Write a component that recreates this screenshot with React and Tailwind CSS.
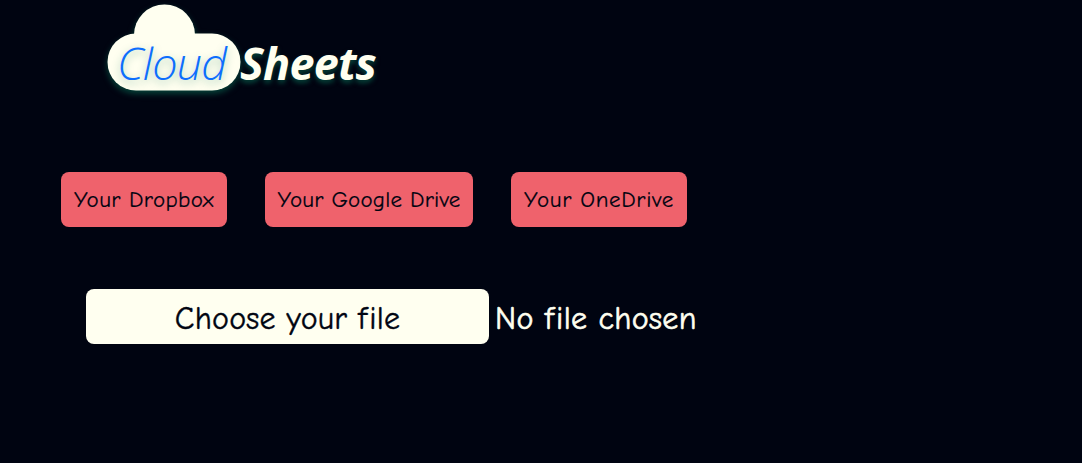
const buttons = [
  { label: 'Your Dropbox', style: 'w-[166px] tracking-[0.4px]' },
  { label: 'Your Google Drive', style: 'w-[208px] tracking-[0.2px]' },
  { label: 'Your OneDrive', style: 'w-[176px] tracking-[0.65px]' },
];

function Logo() {
  return (
    <h1 className="relative ml-[107px] mt-1 h-[88px] w-[280px] font-['Open_Sans',sans-serif] text-[45px] leading-[60px] italic tracking-[-0.8px] text-[#fffff0]">
      <svg
        className="absolute left-0 top-0 overflow-visible drop-shadow-[0_3px_3px_#08705799]"
        width="134"
        height="88"
        viewBox="0 0 134 88"
        fill="#fffff0"
      >
        <circle cx="57.5" cy="31" r="30.5" />
        <rect x="0.5" y="29.5" width="133" height="57" rx="28.5" />
      </svg>
      <span className="absolute left-[10px] top-[29px] font-light text-[#0d6efd] [text-shadow:0_3px_8px_#08705766]">Cloud</span>
      <span className="absolute left-[133px] top-[29px] font-bold [text-shadow:0_3px_5px_#08705799]">Sheets</span>
    </h1>
  );
}

export default function App() {
  return (
    <main className="flex h-[463px] w-full flex-col overflow-hidden bg-[#000411] font-['Comic_Sans_MS','Comic_Neue','Noto_Sans',sans-serif] [font-variant-ligatures:none]">
      <Logo />
      <div className="ml-[61px] mt-20 flex gap-[38px]">
        {buttons.map(({ label, style }) => (
          <button
            key={label}
            className={`h-[55px] shrink-0 whitespace-nowrap rounded-lg bg-[#ef626c] pt-[2px] text-[23px] text-[#000411] [-webkit-text-stroke:0.2px_#000411] ${style}`}
          >
            {label}
          </button>
        ))}
      </div>
      <div className="ml-[86px] mt-[62px] flex items-center gap-[6px] whitespace-nowrap text-[32px]">
        <button className="h-[55px] w-[403px] rounded-lg bg-[#fffff0] pt-[5px] tracking-[0.2px] text-[#000411] [-webkit-text-stroke:0.4px_#000411]">
          Choose your f<span className="ml-[2px]">ile</span>
        </button>
        <span className="pt-[5px] tracking-[0.35px] text-[#fffff0] [-webkit-text-stroke:0.6px_#fffff0]">
          No f<span className="ml-[2px]">ile</span> chosen
        </span>
      </div>
    </main>
  );
}
